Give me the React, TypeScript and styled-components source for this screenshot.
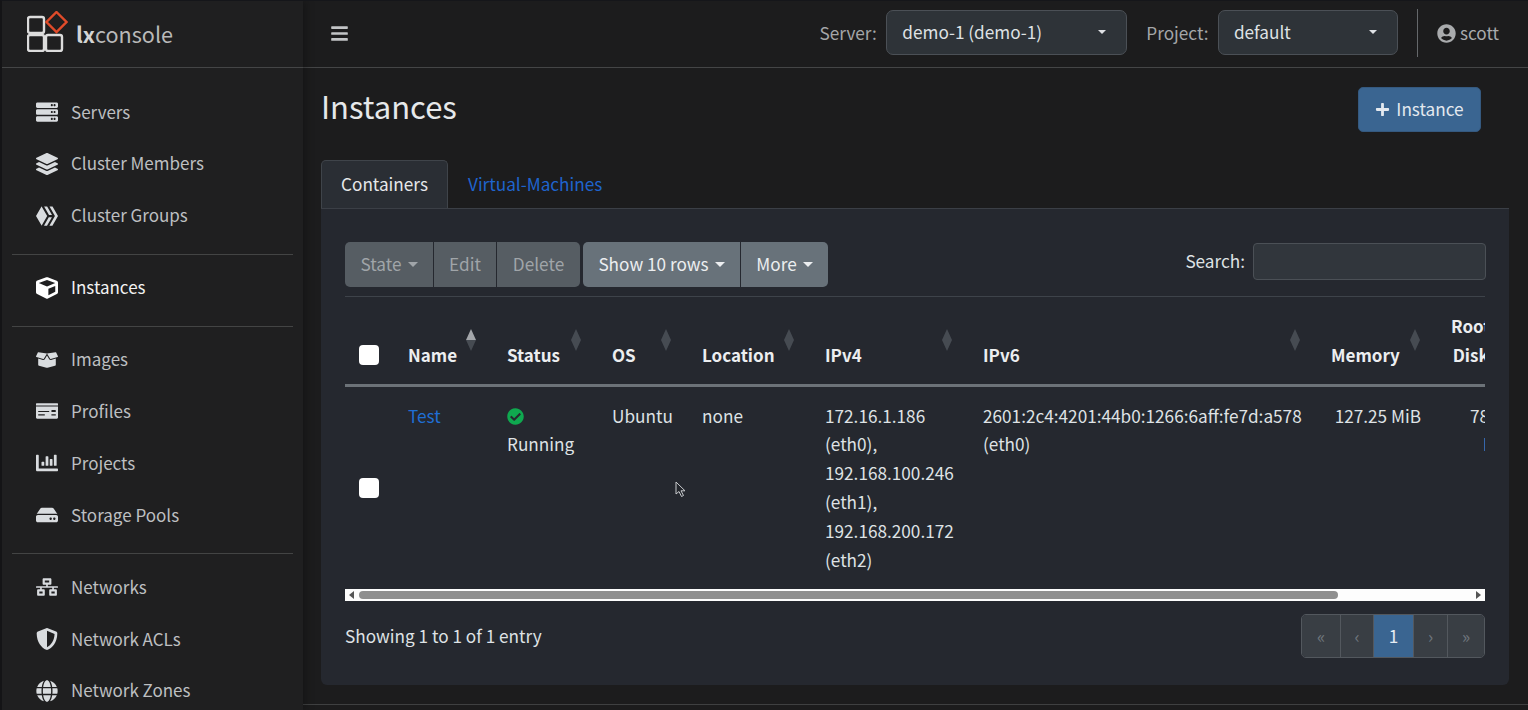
import React from 'react'
import styled, { createGlobalStyle } from 'styled-components'
import {
  FaServer, FaLayerGroup, FaHive, FaCube, FaBoxOpen, FaMoneyCheck, FaChartBar, FaHdd, FaNetworkWired,
  FaShieldAlt, FaGlobe, FaBars, FaUserCircle, FaPlus, FaCheckCircle,
} from 'react-icons/fa'

const GlobalStyle = createGlobalStyle`
  html, body {
    margin: 0;
    height: 100%;
    overflow: hidden;
    background: #1c1c1d;
  }
  body {
    font-family: "Noto Sans CJK JP", "Noto Sans", sans-serif;
    font-size: 17.2px;
    line-height: 28.8px;
    color: #dee2e6;
  }
  * { box-sizing: border-box; }
`

const Page = styled.div`
  display: flex;
  height: 710px;
  overflow: hidden;
  border-left: 2px solid #141416;
  border-top: 1px solid #15161a;
`

const Sidebar = styled.aside`
  width: 301px;
  flex: none;
  background: #1f1f20;
  box-shadow: 3px 0 8px rgba(0, 0, 0, 0.25);
  z-index: 1;
`

const Brand = styled.div`
  height: 67px;
  border-bottom: 1px solid #444546;
  display: flex;
  align-items: center;
  gap: 8px;
  padding: 0 0 0 25px;
  svg { margin-top: -5px; }
`

const BrandName = styled.div`
  font-size: 21.6px;
  color: #b9b9b9;
  b { color: #d4d4d4; font-weight: 700; }
`

const Nav = styled.nav`
  padding: 18px 10px 0;
`

const NavItem = styled.a<{ $active?: boolean }>`
  height: 51.9px;
  display: flex;
  align-items: center;
  padding-left: 10px;
  font-size: 17px;
  color: ${p => (p.$active ? '#f2f2f2' : '#bdbfc1')};
  svg { color: ${p => (p.$active ? '#ffffff' : '#d9dcdf')}; }
`

const NavIcon = styled.span`
  width: 49px;
  display: flex;
  justify-content: center;
  font-size: 22px;
`

const NavRule = styled.hr`
  border: 0;
  border-top: 1px solid #434444;
  margin: 12px 0 7px;
`

const Main = styled.main`
  flex: 1;
  min-width: 0;
  display: flex;
  flex-direction: column;
`

const TopBar = styled.header`
  height: 67px;
  flex: none;
  border-bottom: 1px solid #444546;
  display: flex;
  align-items: center;
  padding: 0 29px 0 27px;
  background: #1c1c1d;
`

const MenuButton = styled.span`
  color: #c2c4c6;
  font-size: 19px;
  display: flex;
  margin-top: -2px;
`

const TopRight = styled.div`
  margin-left: auto;
  display: flex;
  align-items: center;
`

const TopLabel = styled.label`
  font-size: 17.2px;
  color: #a4a6a8;
  margin-right: 9.5px;
  margin-top: -2px;
`

const Select = styled.div<{ $width: number }>`
  width: ${p => p.$width}px;
  height: 45px;
  margin-right: 19px;
  padding: 0 20px 0 15px;
  display: flex;
  align-items: center;
  justify-content: space-between;
  background: #2e3338;
  border: 1px solid #4b5056;
  border-radius: 7px;
  font-size: 17.2px;
  color: #dfe2e5;
  margin-top: -4px;
`

const Caret = styled.span<{ $size?: number }>`
  width: 0;
  height: 0;
  border-left: ${p => p.$size ?? 5}px solid transparent;
  border-right: ${p => p.$size ?? 5}px solid transparent;
  border-top: ${p => p.$size ?? 5}px solid currentColor;
  display: inline-block;
`

const UserBox = styled.div`
  height: 48px;
  margin-top: -2px;
  border-left: 1px solid #65686b;
  padding-left: 19px;
  display: flex;
  align-items: center;
  gap: 4px;
  font-size: 17.2px;
  color: #a9abad;
`

const Content = styled.div`
  flex: 1;
  padding: 19px 19px 0 18px;
`

const TitleRow = styled.div`
  display: flex;
  justify-content: space-between;
  align-items: center;
  padding-right: 28px;
  height: 45px;
`

const Title = styled.h1`
  margin: -6px 0 0;
  font-size: 31px;
  font-weight: 400;
  color: #e6e8ea;
`

const PrimaryButton = styled.button`
  height: 45px;
  width: 123px;
  border: 1px solid #35597f;
  border-radius: 5px;
  background: #3a6591;
  color: #e4e9ef;
  font: inherit;
  font-size: 17.2px;
  padding: 0;
  display: flex;
  align-items: center;
  justify-content: center;
  gap: 6px;
`

const Tabs = styled.div`
  display: flex;
  margin-top: 28px;
  height: 48px;
`

const Tab = styled.a<{ $active?: boolean }>`
  padding: 0 ${p => (p.$active ? '19px' : '20px')};
  display: flex;
  align-items: center;
  font-size: 17.2px;
  border-radius: 5px 5px 0 0;
  color: ${p => (p.$active ? '#e6e8ea' : '#1f64cd')};
  ${p => p.$active && `
    background: #2a2e34;
    border: 1px solid #3f444a;
    border-bottom: 0;
  `}
`

const Panel = styled.section`
  background: #25282f;
  border-top: 1px solid #3b3f46;
  border-radius: 0 0 6px 6px;
  padding: 33px 24px 27px;
  height: 477px;
`

const Toolbar = styled.div`
  display: flex;
  justify-content: space-between;
  height: 55px;
  border-bottom: 1px solid #3e434a;
`

const ButtonGroups = styled.div`
  display: flex;
  gap: 3px;
  height: 45px;
`

const ButtonGroup = styled.div`
  display: flex;
  gap: 1px;
  border-radius: 5px;
  overflow: hidden;
`

const ToolButton = styled.button<{ $width: number; $disabled?: boolean }>`
  width: ${p => p.$width}px;
  border: 0;
  padding: 0;
  font: inherit;
  font-size: 17.2px;
  display: flex;
  align-items: center;
  justify-content: center;
  gap: 6px;
  background: ${p => (p.$disabled ? '#565d63' : '#68727a')};
  color: ${p => (p.$disabled ? '#a0a5a9' : '#eceef0')};
`

const SearchBox = styled.label`
  display: flex;
  align-items: flex-start;
  gap: 8px;
  font-size: 17.2px;
  color: #dfe2e5;
  height: 38px;
  line-height: 38px;
  margin-right: -1px;
`

const SearchInput = styled.input`
  width: 233px;
  height: 37px;
  margin-top: 1px;
  background: #31363c;
  border: 1px solid #4b5056;
  border-radius: 4px;
`

const TableWrap = styled.div`
  overflow: hidden;
  width: 1140px;
`

const Table = styled.table`
  border-collapse: collapse;
  table-layout: fixed;
  width: 1183px;
  font-size: 17.2px;
`

const Th = styled.th<{ $width: number }>`
  width: ${p => p.$width}px;
  position: relative;
  padding: 15px 15px 14.4px;
  text-align: left;
  vertical-align: bottom;
  font-weight: 700;
  font-size: 17px;
  color: #eceef0;
  border-bottom: 3px solid #6c7278;
`

const Td = styled.td<{ $right?: boolean }>`
  padding: 14.6px 15px;
  vertical-align: top;
  font-size: 17.2px;
  color: #dfe2e5;
  text-align: ${p => (p.$right ? 'right' : 'left')};
`

const CheckCell = styled.td`
  padding: 0 0 0 14px;
  vertical-align: middle;
`

const CheckHead = styled.th`
  width: 48px;
  padding: 0 0 18.5px 14px;
  vertical-align: bottom;
  border-bottom: 3px solid #6c7278;
`

const Check = styled.input.attrs({ type: 'checkbox' })`
  appearance: none;
  display: block;
  width: 20px;
  height: 20px;
  margin: 0;
  background: #fff;
  border-radius: 4px;
`

const SortMark = styled.svg`
  position: absolute;
  top: 32px;
  right: 16px;
`

const StackedHead = styled.span`
  display: inline-block;
  text-align: center;
`

const Link = styled.a`
  color: #1f6fd6;
`

const StatusIcon = styled.span`
  display: block;
  color: #0fa84f;
  font-size: 17px;
  height: 28.8px;
  padding-top: 2px;
`

const ScrollTrack = styled.div`
  height: 12px;
  background: #fdfdfd;
  display: flex;
  align-items: center;
  padding: 0 4px;
  gap: 5px;
`

const ScrollThumb = styled.div`
  width: 979px;
  height: 8px;
  border-radius: 4px;
  background: #8f8f8f;
`

const ScrollArrow = styled.span<{ $dir: 'left' | 'right' }>`
  width: 0;
  height: 0;
  border-top: 4px solid transparent;
  border-bottom: 4px solid transparent;
  ${p => (p.$dir === 'left' ? 'border-right: 5px solid #555;' : 'border-left: 5px solid #555; margin-left: auto;')}
`

const PanelFoot = styled.div`
  display: flex;
  justify-content: space-between;
  margin-top: 13px;
`

const Showing = styled.div`
  font-size: 17.2px;
  color: #dfe2e5;
  padding-top: 8.5px;
`

const Pager = styled.div`
  display: flex;
  height: 44px;
  border: 1px solid #53585e;
  border-radius: 5px;
  overflow: hidden;
`

const PageCell = styled.span<{ $width: number; $active?: boolean }>`
  width: ${p => p.$width}px;
  display: flex;
  align-items: center;
  justify-content: center;
  font-size: 17.2px;
  background: ${p => (p.$active ? '#3a6591' : '#393e44')};
  color: ${p => (p.$active ? '#e6edf4' : '#6f767d')};
  & + & { border-left: 1px solid #53585e; }
`

const PageFooter = styled.footer`
  margin-top: 19px;
  border-top: 1px solid #3f4041;
  margin-right: -19px;
  margin-left: -18px;
`

const Pointer = styled.svg`
  position: absolute;
  left: 675px;
  top: 481px;
  z-index: 2;
`

const Logo = () => (
  <svg width="41" height="41" viewBox="0 0 41 41" fill="none" stroke="#dcdcdc" strokeWidth="2.4">
    <rect x="1" y="6" width="16" height="16" rx="2" />
    <rect x="1" y="24" width="16" height="16" rx="2" />
    <rect x="19" y="24" width="16" height="16" rx="2" />
    <path d="M29.5 1 L39.5 11 L29.5 21 L19.5 11 Z" stroke="#e04b2a" />
  </svg>
)

const SortIcon = ({ active }: { active?: boolean }) => (
  <SortMark width="10" height="22" viewBox="0 0 10 22">
    <path d="M5 0 L10 11 H0 Z" fill={active ? '#a3a6aa' : '#464b52'} />
    <path d="M5 22 L10 11 H0 Z" fill="#464b52" />
  </SortMark>
)

const navTop = [
  { icon: <FaServer />, label: 'Servers' },
  { icon: <FaLayerGroup />, label: 'Cluster Members' },
  { icon: <FaHive />, label: 'Cluster Groups' },
]
const navStore = [
  { icon: <FaBoxOpen />, label: 'Images' },
  { icon: <FaMoneyCheck />, label: 'Profiles' },
  { icon: <FaChartBar />, label: 'Projects' },
  { icon: <FaHdd />, label: 'Storage Pools' },
]
const navNet = [
  { icon: <FaNetworkWired />, label: 'Networks' },
  { icon: <FaShieldAlt />, label: 'Network ACLs' },
  { icon: <FaGlobe />, label: 'Network Zones' },
]

const columns = [
  { label: 'Name', width: 99, active: true },
  { label: 'Status', width: 105 },
  { label: 'OS', width: 90 },
  { label: 'Location', width: 123 },
  { label: 'IPv4', width: 158 },
  { label: 'IPv6', width: 348 },
  { label: 'Memory', width: 120 },
]

const renderNav = (items: { icon: React.ReactNode; label: string }[]) =>
  items.map(item => (
    <NavItem key={item.label}>
      <NavIcon>{item.icon}</NavIcon>
      {item.label}
    </NavItem>
  ))

export default function App() {
  return (
    <>
      <GlobalStyle />
      <Page>
        <Sidebar>
          <Brand>
            <Logo />
            <BrandName><b>lx</b>console</BrandName>
          </Brand>
          <Nav>
            {renderNav(navTop)}
            <NavRule />
            <NavItem $active>
              <NavIcon><FaCube /></NavIcon>
              Instances
            </NavItem>
            <NavRule />
            {renderNav(navStore)}
            <NavRule />
            {renderNav(navNet)}
          </Nav>
        </Sidebar>
        <Main>
          <TopBar>
            <MenuButton><FaBars /></MenuButton>
            <TopRight>
              <TopLabel>Server:</TopLabel>
              <Select $width={241}>demo-1 (demo-1)<Caret $size={4} /></Select>
              <TopLabel>Project:</TopLabel>
              <Select $width={180}>default<Caret $size={4} /></Select>
              <UserBox><FaUserCircle size={19} />scott</UserBox>
            </TopRight>
          </TopBar>
          <Content>
            <TitleRow>
              <Title>Instances</Title>
              <PrimaryButton><FaPlus size={15} />Instance</PrimaryButton>
            </TitleRow>
            <Tabs>
              <Tab $active>Containers</Tab>
              <Tab>Virtual-Machines</Tab>
            </Tabs>
            <Panel>
              <Toolbar>
                <ButtonGroups>
                  <ButtonGroup>
                    <ToolButton $width={88} $disabled>State<Caret /></ToolButton>
                    <ToolButton $width={62} $disabled>Edit</ToolButton>
                    <ToolButton $width={83} $disabled>Delete</ToolButton>
                  </ButtonGroup>
                  <ButtonGroup>
                    <ToolButton $width={157}>Show 10 rows<Caret /></ToolButton>
                    <ToolButton $width={87}>More<Caret /></ToolButton>
                  </ButtonGroup>
                </ButtonGroups>
                <SearchBox>Search:<SearchInput /></SearchBox>
              </Toolbar>
              <TableWrap>
                <Table>
                  <thead>
                    <tr>
                      <CheckHead><Check /></CheckHead>
                      {columns.map(col => (
                        <Th key={col.label} $width={col.width}>
                          {col.label}
                          <SortIcon active={col.active} />
                        </Th>
                      ))}
                      <Th $width={92}><StackedHead>Root<br />Disk</StackedHead></Th>
                    </tr>
                  </thead>
                  <tbody>
                    <tr>
                      <CheckCell><Check /></CheckCell>
                      <Td><Link>Test</Link></Td>
                      <Td>
                        <StatusIcon><FaCheckCircle /></StatusIcon>
                        Running
                      </Td>
                      <Td>Ubuntu</Td>
                      <Td>none</Td>
                      <Td>172.16.1.186 (eth0), 192.168.100.246 (eth1), 192.168.200.172 (eth2)</Td>
                      <Td>2601:2c4:4201:44b0:1266:6aff:fe7d:a578 (eth0)</Td>
                      <Td $right>127.25 MiB</Td>
                      <Td $right>78.90 MiB</Td>
                    </tr>
                  </tbody>
                </Table>
              </TableWrap>
              <ScrollTrack>
                <ScrollArrow $dir="left" />
                <ScrollThumb />
                <ScrollArrow $dir="right" />
              </ScrollTrack>
              <PanelFoot>
                <Showing>Showing 1 to 1 of 1 entry</Showing>
                <Pager>
                  <PageCell $width={38}>«</PageCell>
                  <PageCell $width={33}>‹</PageCell>
                  <PageCell $width={40} $active>1</PageCell>
                  <PageCell $width={34}>›</PageCell>
                  <PageCell $width={37}>»</PageCell>
                </Pager>
              </PanelFoot>
            </Panel>
            <PageFooter />
          </Content>
        </Main>
        <Pointer width="12" height="17" viewBox="0 0 12 17">
          <path d="M1 1 V13 L4 10.5 L6.5 15.5 L8.5 14.5 L6 9.8 H10 Z" fill="#23262c" stroke="#c9cbce" strokeWidth="1" />
        </Pointer>
      </Page>
    </>
  )
}
